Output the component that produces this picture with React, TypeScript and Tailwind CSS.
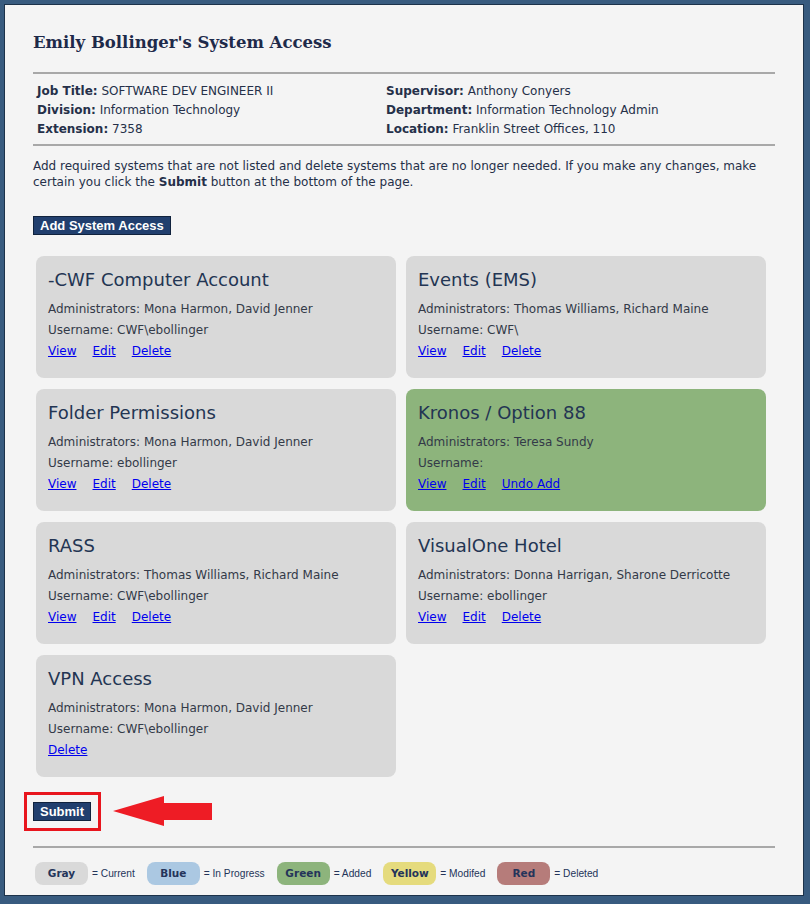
import React from "react";

type Access = {
  name: string;
  admins: string;
  username: string;
  links: string[];
  tone?: "gray" | "green";
};

const systems: Access[] = [
  { name: "-CWF Computer Account", admins: "Mona Harmon, David Jenner", username: "CWF\\ebollinger", links: ["View", "Edit", "Delete"] },
  { name: "Events (EMS)", admins: "Thomas Williams, Richard Maine", username: "CWF\\", links: ["View", "Edit", "Delete"] },
  { name: "Folder Permissions", admins: "Mona Harmon, David Jenner", username: "ebollinger", links: ["View", "Edit", "Delete"] },
  { name: "Kronos / Option 88", admins: "Teresa Sundy", username: "", links: ["View", "Edit", "Undo Add"], tone: "green" },
  { name: "RASS", admins: "Thomas Williams, Richard Maine", username: "CWF\\ebollinger", links: ["View", "Edit", "Delete"] },
  { name: "VisualOne Hotel", admins: "Donna Harrigan, Sharone Derricotte", username: "ebollinger", links: ["View", "Edit", "Delete"] },
  { name: "VPN Access", admins: "Mona Harmon, David Jenner", username: "CWF\\ebollinger", links: ["Delete"] },
];

const legend = [
  { label: "Gray", note: "= Current", cls: "bg-[#d9d9d9]" },
  { label: "Blue", note: "= In Progress", cls: "bg-[#abc8e2]" },
  { label: "Green", note: "= Added", cls: "bg-[#8db47c]" },
  { label: "Yellow", note: "= Modifed", cls: "bg-[#e5db7d]" },
  { label: "Red", note: "= Deleted", cls: "bg-[#b67c7a]" },
];

function InfoItem({ label, value }: { label: string; value: string }) {
  return (
    <div>
      <span className="font-bold">{label}:</span> {value}
    </div>
  );
}

function AccessCard({ item }: { item: Access }) {
  return (
    <div
      className={`h-[122px] rounded-[8px] px-[12px] pt-[12px] ${
        item.tone === "green" ? "bg-[#8db47c]" : "bg-[#d9d9d9]"
      }`}
    >
      <div className="text-[18px] leading-[24px] text-[#233553]">{item.name}</div>
      <div className="mt-[7px] text-[12px] leading-[21px] text-[#333a48]">
        <div>Administrators: {item.admins}</div>
        <div>Username: {item.username}</div>
        <div className="flex gap-[16px]">
          {item.links.map((l) => (
            <a key={l} href="#" className="text-[#0000ee] underline">
              {l}
            </a>
          ))}
        </div>
      </div>
    </div>
  );
}

export default function App() {
  return (
    <div className="min-h-[904px] bg-[#385b7f] pl-[4px] pt-[4px] pr-[6px] pb-[8px] font-['DejaVu_Sans',Verdana,sans-serif]">
      <div className="h-[892px] border border-[#1c324a] bg-[#f4f4f4] pl-[28px] pr-[28px] pt-[26px]">
        <h1 className="font-['DejaVu_Serif',Georgia,serif] text-[16.5px] font-bold leading-[24px] text-[#1e2a4a]">
          Emily Bollinger's System Access
        </h1>

        <div className="mt-[17px] border-t-2 border-[#a8a8a8]" />
        {/* employee info */}
        <div className="ml-[4px] mt-[8px] grid grid-cols-[349px_1fr] text-[12px] leading-[19px] text-[#253049]">
          <div>
            <InfoItem label="Job Title" value="SOFTWARE DEV ENGINEER II" />
            <InfoItem label="Division" value="Information Technology" />
            <InfoItem label="Extension" value="7358" />
          </div>
          <div>
            <InfoItem label="Supervisor" value="Anthony Conyers" />
            <InfoItem label="Department" value="Information Technology Admin" />
            <InfoItem label="Location" value="Franklin Street Offices, 110" />
          </div>
        </div>
        <div className="mt-[5px] border-t-2 border-[#a8a8a8]" />

        <p className="mt-[12px] text-[12px] leading-[16px] text-[#253049]">
          Add required systems that are not listed and delete systems that are no longer needed. If you make any changes, make
          certain you click the <b>Submit</b> button at the bottom of the page.
        </p>

        <button className="mt-[26px] block h-[19px] border border-[#10223d] bg-[#213f6e] px-[6px] font-['Liberation_Sans',Arial,sans-serif] text-[13px] font-bold leading-[17px] text-white">
          Add System Access
        </button>

        {/* system cards */}
        <div className="ml-[3px] mt-[21px] grid grid-cols-[360px_360px] gap-x-[10px] gap-y-[11px]">
          {systems.map((s) => (
            <AccessCard key={s.name} item={s} />
          ))}
        </div>

        <div className="mt-[15px] flex items-center">
          <div className="-ml-[9px] flex border-[3px] border-[#e8151d] py-[7px] pl-[6px] pr-[7px]">
            <button className="block h-[19px] border border-[#10223d] bg-[#213f6e] px-[6px] font-['Liberation_Sans',Arial,sans-serif] text-[13px] font-bold leading-[17px] text-white">
              Submit
            </button>
          </div>
          <svg width="100" height="31" viewBox="0 0 100 31" className="ml-[12px]">
            <polygon points="0,15 51,0 51,7 99,7 99,24 51,24 51,30" fill="#ee1c25" />
          </svg>
        </div>

        <div className="mt-[15px] border-t-2 border-[#a8a8a8]" />
        {/* legend */}
        <div className="ml-[2px] mt-[14px] flex items-center text-[#24345a]">
          {legend.map((l, i) => (
            <div key={l.label} className={`flex items-center ${i > 0 ? "ml-[12px]" : ""}`}>
              <div className={`flex h-[23px] w-[53px] items-center justify-center rounded-[8px] text-[10.5px] font-bold ${l.cls}`}>
                {l.label}
              </div>
              <span className="ml-[4px] font-['Liberation_Sans',Arial,sans-serif] text-[10.2px]">{l.note}</span>
            </div>
          ))}
        </div>
      </div>
    </div>
  );
}
